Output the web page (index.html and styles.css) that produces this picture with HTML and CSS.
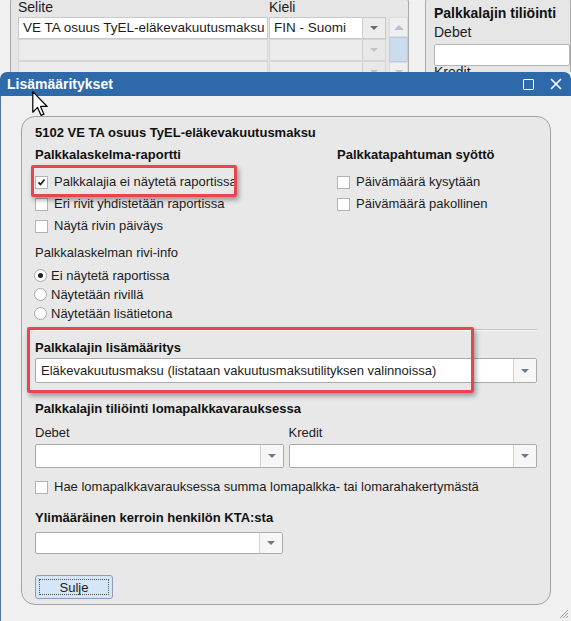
FILE: index.html
```html
<!DOCTYPE html>
<html>
<head>
    <title>Lisämääritykset</title>
    <link rel="stylesheet" href="styles.css">
</head>
<body>
    <!-- window behind the dialog -->
    <div class="behind">
        <div class="bg-panel bg-left">
            <div class="bg-labels">
                <span class="bg-col1">Selite</span>
                <span>Kieli</span>
            </div>
            <div class="bg-table">
                <div class="bg-rows">
                    <div class="bg-row">
                        <div class="bg-cell bg-col1">VE TA osuus TyEL-eläkevakuutusmaksu</div>
                        <div class="bg-cell bg-col2">FIN - Suomi<span class="bg-drop"><span class="arrow"></span></span></div>
                    </div>
                    <div class="bg-row empty">
                        <div class="bg-cell bg-col1"></div>
                        <div class="bg-cell bg-col2"><span class="bg-drop"><span class="arrow"></span></span></div>
                    </div>
                    <div class="bg-row empty">
                        <div class="bg-cell bg-col1"></div>
                        <div class="bg-cell bg-col2"><span class="bg-drop"><span class="arrow"></span></span></div>
                    </div>
                </div>
                <div class="bg-scroll">
                    <div class="scroll-btn"><span class="arrow-up"></span></div>
                    <div class="scroll-thumb"></div>
                    <div class="scroll-btn"><span class="arrow"></span></div>
                </div>
            </div>
        </div>
        <div class="bg-panel bg-right">
            <div class="bold">Palkkalajin tiliöinti</div>
            <div class="bg-debet">Debet</div>
            <div class="bg-input"></div>
            <div class="bg-kredit">Kredit</div>
        </div>
    </div>

    <div class="dialog">
        <div class="titlebar">
            <span>Lisämääritykset</span>
            <span class="tb-icons">
                <span class="tb-max"></span>
                <svg class="tb-close" width="12" height="12" viewBox="0 0 12 12">
                    <path d="M1 1 L11 11 M11 1 L1 11" stroke="#fff" stroke-width="1.6"/>
                </svg>
            </span>
        </div>
        <div class="dialog-body">
            <div class="panel">
                <div class="bold">5102 VE TA osuus TyEL-eläkevakuutusmaksu</div>

                <div class="cols">
                    <div>
                        <div class="bold">Palkkalaskelma-raportti</div>
                        <div class="check first">
                            <span class="box">
                                <svg width="11" height="11" viewBox="0 0 11 11"><path d="M2.5 5.5 L4.5 7.5 L8.5 2.5" stroke="#222" stroke-width="1.8" fill="none"/></svg>
                            </span>
                            Palkkalajia ei näytetä raportissa
                        </div>
                        <div class="check">
                            <span class="box"></span>
                            Eri rivit yhdistetään raportissa
                        </div>
                        <div class="check">
                            <span class="box"></span>
                            Näytä rivin päiväys
                        </div>
                    </div>
                    <div>
                        <div class="bold">Palkkatapahtuman syöttö</div>
                        <div class="check first">
                            <span class="box"></span>
                            Päivämäärä kysytään
                        </div>
                        <div class="check">
                            <span class="box"></span>
                            Päivämäärä pakollinen
                        </div>
                    </div>
                </div>

                <div class="sub-label">Palkkalaskelman rivi-info</div>
                <div class="radio first"><span class="circle on"></span>Ei näytetä raportissa</div>
                <div class="radio"><span class="circle"></span>Näytetään rivillä</div>
                <div class="radio"><span class="circle"></span>Näytetään lisätietona</div>

                <div class="separator"></div>

                <div class="bold head-lisa">Palkkalajin lisämääritys</div>
                <div class="select select-wide">
                    <span class="select-text">Eläkevakuutusmaksu (listataan vakuutusmaksutilityksen valinnoissa)</span>
                    <span class="select-btn"><span class="arrow"></span></span>
                </div>

                <div class="bold head-loma">Palkkalajin tiliöinti lomapalkkavarauksessa</div>
                <div class="pair">
                    <div>
                        <div class="pair-label">Debet</div>
                        <div class="select select-mid">
                            <span class="select-text"></span>
                            <span class="select-btn"><span class="arrow"></span></span>
                        </div>
                    </div>
                    <div>
                        <div class="pair-label">Kredit</div>
                        <div class="select select-mid">
                            <span class="select-text"></span>
                            <span class="select-btn"><span class="arrow"></span></span>
                        </div>
                    </div>
                </div>
                <div class="check check-loma">
                    <span class="box"></span>
                    Hae lomapalkkavarauksessa summa lomapalkka- tai lomarahakertymästä
                </div>

                <div class="bold head-kta">Ylimääräinen kerroin henkilön KTA:sta</div>
                <div class="select select-small">
                    <span class="select-text"></span>
                    <span class="select-btn"><span class="arrow"></span></span>
                </div>

                <button class="btn"><span class="btn-focus">Sulje</span></button>

                <div class="highlight hl-check"></div>
                <div class="highlight hl-lisa"></div>
            </div>
        </div>
        <svg class="grip" width="10" height="10" viewBox="0 0 10 10">
            <path d="M9 1 L1 9 M9 4 L4 9 M9 7 L7 9" stroke="#a0a0a0" stroke-width="1"/>
        </svg>
    </div>

    <svg class="cursor" width="18" height="26" viewBox="0 0 13 19">
        <path d="M0.5 0.5 L0.5 15.5 L4 12 L6.5 17.8 L8.6 16.9 L6.2 11.3 L11 11.3 Z" fill="#fff" stroke="#000" stroke-width="0.9" stroke-linejoin="round"/>
    </svg>
</body>
</html>
```

FILE: styles.css
```css
* {
    box-sizing: border-box;
}
body {
    margin: 0;
    width: 571px;
    height: 621px;
    overflow: hidden;
    position: relative;
    background: #f0f0f0;
    font-family: "Liberation Sans", Arial, sans-serif;
    font-size: 13px;
    line-height: 16px;
    color: #1c1c1c;
}
.bold {
    font-weight: bold;
    color: #111;
}
.arrow {
    width: 0;
    height: 0;
    border-top: 4px solid #6b7b8c;
    border-left: 4px solid transparent;
    border-right: 4px solid transparent;
}
.arrow-up {
    width: 0;
    height: 0;
    border-bottom: 5px solid #b4c3d2;
    border-left: 5px solid transparent;
    border-right: 5px solid transparent;
}

/* background window */
.behind {
    display: flex;
    height: 72px;
    overflow: hidden;
}
.bg-panel {
    margin-top: -10px;
    height: 110px;
    border: 1px solid #a9a9a9;
    border-radius: 12px;
    background: #e6e6e6;
    font-size: 14px;
}
.bg-left {
    margin-left: 10px;
    width: 401px;
    padding: 8px 0 0 7px;
}
.bg-labels {
    display: flex;
}
.bg-col1 {
    width: 251px;
}
.bg-table {
    display: flex;
    margin-top: 2px;
}
.bg-row {
    display: flex;
    height: 22px;
}
.bg-cell {
    display: flex;
    align-items: center;
    height: 22px;
    padding-left: 4px;
    background: #fff;
    border: 1px solid #c9c9c9;
    white-space: nowrap;
    overflow: hidden;
    font-size: 13.5px;
}
.bg-row .bg-col1 {
    width: 250px;
    margin-right: 1px;
}
.bg-col2 {
    width: 117px;
    padding-right: 0;
}
.bg-drop {
    display: flex;
    align-items: center;
    justify-content: center;
    flex-shrink: 0;
    width: 23px;
    height: 20px;
    margin-left: auto;
    background: #ececec;
    border-left: 1px solid #cfcfcf;
}
.bg-drop .arrow {
    border-top-color: #606a75;
}
.bg-row.empty .bg-cell {
    background: #ebebeb;
    border-color: #d6d6d6;
}
.bg-row.empty .bg-drop {
    background: #e8e8e8;
}
.bg-row.empty .arrow {
    border-top-color: #c2c2c2;
}
.bg-scroll {
    width: 19px;
    margin-left: 3px;
}
.scroll-btn {
    display: flex;
    align-items: center;
    justify-content: center;
    height: 20px;
    background: #efefef;
    border: 1px solid #dcdcdc;
}
.scroll-btn .arrow {
    border-top-color: #c4c4c4;
}
.scroll-thumb {
    height: 25px;
    background: #cadcee;
    border: 1px solid #b9cde2;
}
.bg-right {
    margin-left: 16px;
    width: 200px;
    padding: 14px 0 0 8px;
}
.bg-debet {
    margin-top: 3px;
}
.bg-input {
    margin-top: 4px;
    height: 22px;
    background: #fff;
    border: 1px solid #b4b4b4;
    border-radius: 2px;
}
.bg-kredit {
    margin-top: -2px;
}

/* dialog */
.dialog {
    position: relative;
    height: 549px;
}
.titlebar {
    display: flex;
    align-items: center;
    height: 24px;
    padding: 0 9px 0 7px;
    background: #2e6aa9;
    border-radius: 7px 7px 0 0;
    color: #fff;
    font-weight: bold;
    font-size: 14px;
}
.tb-icons {
    display: flex;
    align-items: center;
    gap: 16px;
    margin-left: auto;
}
.tb-max {
    width: 11px;
    height: 11px;
    border: 1.5px solid #fff;
    border-radius: 1px;
}
.dialog-body {
    height: 525px;
    padding: 20px 20px 16px 20px;
    background: #f0f0f0;
    border-left: 1px solid #55739c;
}
.panel {
    position: relative;
    width: 530px;
    height: 489px;
    padding: 8px 13px 0 13px;
    background: #e8e8e8;
    border: 1px solid #a3a3a3;
    border-radius: 14px;
}
.cols {
    display: grid;
    grid-template-columns: 302px 1fr;
    margin-top: 6px;
}
.check {
    display: flex;
    align-items: center;
    height: 22px;
}
.check.first {
    margin-top: 8px;
}
.box {
    display: flex;
    align-items: center;
    justify-content: center;
    width: 13px;
    height: 13px;
    margin-right: 6px;
    background: #fff;
    border: 1px solid #b3b3b3;
}
.sub-label {
    margin-top: 8px;
}
.radio {
    display: flex;
    align-items: center;
    height: 19px;
}
.radio.first {
    margin-top: 5px;
}
.circle {
    display: flex;
    align-items: center;
    justify-content: center;
    width: 13px;
    height: 13px;
    margin-left: -1px;
    margin-right: 4px;
    background: #fff;
    border: 1px solid #a8a8a8;
    border-radius: 50%;
}
.circle.on::after {
    content: "";
    width: 5px;
    height: 5px;
    border-radius: 50%;
    background: #222;
}
.separator {
    margin-top: 6px;
    height: 2px;
    border-top: 1px solid #c6c6c6;
    border-bottom: 1px solid #f6f6f6;
}
.head-lisa {
    margin-top: 9px;
}
.select {
    display: flex;
    background: #fff;
    border: 1px solid #ababab;
    border-radius: 2px;
}
.select-text {
    flex: 1;
    display: flex;
    align-items: center;
    padding-left: 5px;
}
.select-btn {
    display: flex;
    align-items: center;
    justify-content: center;
    width: 23px;
    background: #f6f6f6;
    border-left: 1px solid #d3d3d3;
}
.select-wide {
    margin-top: 2px;
    height: 25px;
}
.head-loma {
    margin-top: 18px;
}
.pair {
    display: grid;
    grid-template-columns: 1fr 1fr;
    gap: 5px;
}
.pair-label {
    margin-top: 8px;
}
.select-mid {
    margin-top: 3px;
    height: 24px;
}
.check-loma {
    margin-top: 8px;
}
.head-kta {
    margin-top: 12px;
}
.select-small {
    margin-top: 6px;
    width: 248px;
    height: 22px;
}
.btn {
    display: flex;
    margin-top: 21px;
    padding: 3px;
    width: 78px;
    height: 24px;
    background: #d5e6f8;
    border: 1px solid #8f9eb2;
    border-radius: 3px;
    font-family: "Liberation Sans", Arial, sans-serif;
    font-size: 13px;
    color: #1c1c1c;
}
.btn-focus {
    flex: 1;
    display: flex;
    align-items: center;
    justify-content: center;
    border: 1px dotted #555;
}

/* red annotation boxes drawn over the form */
.highlight {
    position: absolute;
    border: 3px solid #e6464f;
    border-radius: 2px;
    box-shadow: 2px 3px 5px rgba(0, 0, 0, 0.35);
}
.hl-check {
    left: 9px;
    top: 48px;
    width: 206px;
    height: 32px;
}
.hl-lisa {
    left: 5px;
    top: 210px;
    width: 447px;
    height: 66px;
}
.grip {
    position: absolute;
    right: 2px;
    bottom: 2px;
}
.cursor {
    position: absolute;
    left: 32px;
    top: 91px;
}
```
